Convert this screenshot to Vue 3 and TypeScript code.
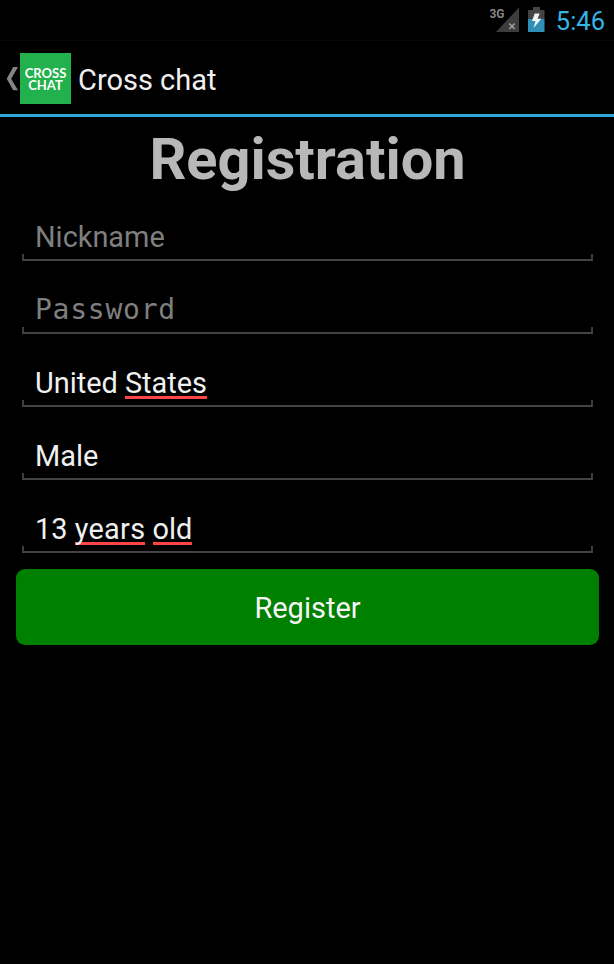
<script setup lang="ts">
interface Word {
  text: string
  flagged?: boolean
}

interface Field {
  id: string
  words: Word[]
  hint?: boolean
  mono?: boolean
}

const fields: Field[] = [
  { id: 'nickname', words: [{ text: 'Nickname' }], hint: true },
  { id: 'password', words: [{ text: 'Password' }], hint: true, mono: true },
  { id: 'country', words: [{ text: 'United ' }, { text: 'States', flagged: true }] },
  { id: 'gender', words: [{ text: 'Male' }] },
  {
    id: 'age',
    words: [{ text: '13 ' }, { text: 'years', flagged: true }, { text: ' ' }, { text: 'old', flagged: true }],
  },
]
</script>

<template>
  <div class="screen">
    <div class="status-bar">
      <svg class="signal" width="32" height="28" viewBox="0 0 32 28">
        <text class="network" x="0.5" y="11" textLength="15" lengthAdjust="spacingAndGlyphs">3G</text>
        <path d="M30 0.5V25H7Z" fill="#3d3d3d" />
        <path d="M20.3 16.5L25.7 22M25.7 16.5L20.3 22" stroke="#a0a0a0" stroke-width="1.5" />
      </svg>
      <svg class="battery" width="17" height="26" viewBox="0 0 17 26">
        <path d="M5 0H12V3H16.5V12H0V3H5Z" fill="#444" />
        <path d="M0 12H16.5V25H0Z" fill="#318fb7" />
        <path d="M6.7 6.5H11.7L9.6 11.7H13.3L5.6 21L7.5 14.1H4Z" fill="#eef5f7" />
      </svg>
      <span class="clock">5:46</span>
    </div>

    <header class="action-bar">
      <svg class="back" width="12" height="24" viewBox="0 0 12 24">
        <path d="M7.2 0H12L5.2 11.7L12 23.3H7.2L0.7 11.7Z" fill="#858585" />
      </svg>
      <div class="logo">CROSS<br />CHAT</div>
      <div class="app-name">Cross chat</div>
    </header>

    <main class="content">
      <h1>Registration</h1>
      <div v-for="field in fields" :key="field.id" class="field" :class="{ hint: field.hint, mono: field.mono }">
        <div class="value"><span v-for="(word, i) in field.words" :key="i" :class="{ flagged: word.flagged }">{{ word.text }}</span></div>
        <div class="line"></div>
      </div>
      <button class="register" type="button">Register</button>
    </main>
  </div>
</template>

<style>
body {
  background: #000;
}
</style>

<style scoped>
.screen {
  box-sizing: border-box;
  width: 614px;
  height: 964px;
  overflow: hidden;
  background: #000;
  color: #f0f0f0;
  font-family: Roboto, sans-serif;
}

.status-bar {
  box-sizing: border-box;
  display: flex;
  justify-content: flex-end;
  align-items: flex-start;
  height: 41px;
  padding: 7px 9px 0 0;
  border-bottom: 1px solid #090909;
}

.signal {
  margin-right: 7px;
}

.network {
  font: bold 13px Roboto, sans-serif;
  fill: #858585;
}

.battery {
  margin-right: 11px;
}

.clock {
  font-size: 25.5px;
  line-height: 28px;
  color: #33b5e5;
}

.action-bar {
  box-sizing: border-box;
  display: flex;
  align-items: center;
  height: 76px;
  padding-left: 6px;
  border-bottom: 3px solid #2fa6d3;
}

.back {
  margin: 2px 2px 0 0;
}

.logo {
  box-sizing: border-box;
  width: 51px;
  height: 51px;
  margin-top: 2px;
  padding-top: 14px;
  background: #22b14c;
  color: #fff;
  font: bold 13px/12px Lato, sans-serif;
  text-align: center;
}

.app-name {
  margin: 4px 0 0 7px;
  font-size: 29px;
  line-height: 36px;
}

.content {
  padding: 0 15px 0 16px;
}

h1 {
  margin: 0;
  height: 80px;
  line-height: 84px;
  font-size: 57.7px;
  font-weight: 700;
  text-align: center;
  color: #b8b8b8;
}

.field {
  display: flex;
  flex-direction: column;
  justify-content: flex-end;
  height: 64px;
  margin: 0 6px 9px;
}

.value {
  height: 36px;
  padding-left: 13px;
  font-size: 28.9px;
  line-height: 40px;
  white-space: pre;
}

.line {
  height: 5px;
  margin-top: 1px;
  border: 2px solid #3d3d3d;
  border-bottom-color: #444;
  border-top: 0;
}

.hint .value {
  color: #7f7f7f;
}

.mono .value {
  font-family: "DejaVu Sans Mono", monospace;
  font-size: 28px;
  letter-spacing: 0.75px;
}

.flagged {
  display: inline-block;
  height: 36px;
  background: linear-gradient(#ff4444, #ff4444) 0 33px / 100% 3px no-repeat;
}

.flagged:has(+ span) {
  letter-spacing: 0.3px;
}

.register {
  display: block;
  width: 583px;
  height: 76px;
  margin-top: 16px;
  padding: 1px 0 0;
  border: 0;
  border-radius: 9px;
  background: #008000;
  color: #f5f5f5;
  font: 29px Roboto, sans-serif;
}
</style>
